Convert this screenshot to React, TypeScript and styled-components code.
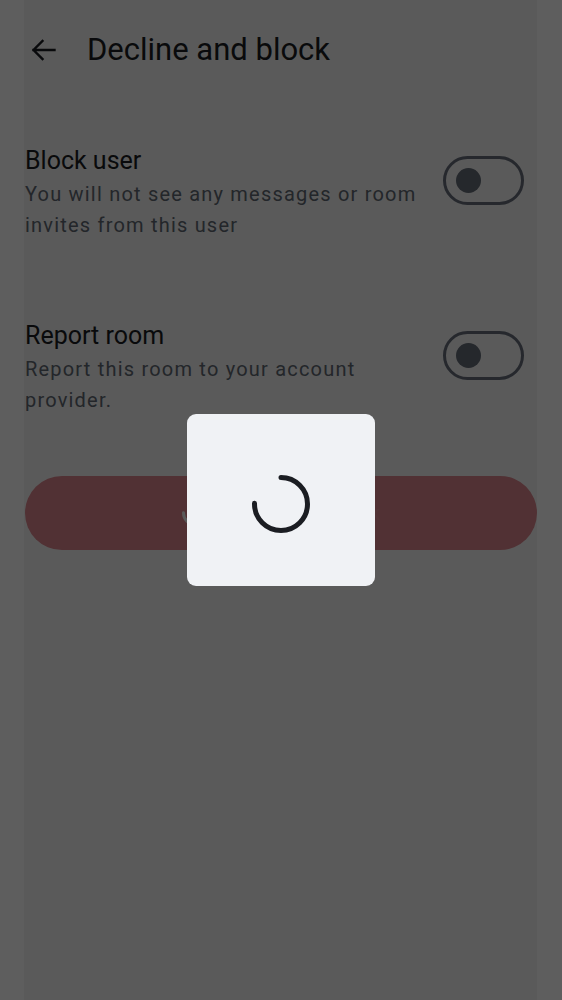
import React from "react";
import styled, { createGlobalStyle } from "styled-components";

const GlobalStyle = createGlobalStyle`
  html, body { margin: 0; padding: 0; background: #ffffff; }
  body { font-family: Roboto, "Noto Sans", sans-serif; -webkit-font-smoothing: antialiased; }
  * { box-sizing: border-box; }
`;

const Page = styled.div`
  position: relative;
  min-height: 1000px;
  background: #ffffff;
  color: #1b1d22;
`;

const TopBar = styled.header`
  height: 100px;
  display: flex;
  align-items: center;
  padding-left: 31px;
  gap: 31px;
`;

const BackButton = styled.button`
  width: 25px;
  height: 24px;
  padding: 0;
  border: 0;
  background: none;
  display: flex;
  align-items: center;
  justify-content: center;
  color: #1b1d22;
`;

const Title = styled.h1`
  margin: 0;
  font-size: 31px;
  font-weight: 400;
  line-height: 36px;
  color: #1b1d22;
`;

const Content = styled.main`
  padding: 46px 25px 0;
  display: flex;
  flex-direction: column;
`;

const SettingsList = styled.div`
  display: flex;
  flex-direction: column;
  gap: 81px;
`;

const SettingRow = styled.div`
  display: flex;
  align-items: flex-start;
  justify-content: space-between;
  gap: 16px;
`;

const SettingText = styled.div`
  flex: 1;
  display: flex;
  flex-direction: column;
  gap: 3px;
`;

const SettingTitle = styled.div`
  font-size: 25px;
  line-height: 30px;
  color: #1b1d22;
`;

const SettingDescription = styled.div`
  font-size: 20px;
  line-height: 30.7px;
  letter-spacing: 1.2px;
  color: #656d77;
`;

const SwitchTrack = styled.div<{ $on?: boolean }>`
  flex: none;
  width: 81px;
  height: 49px;
  margin-top: 10px;
  margin-right: 13px;
  border: 3px solid #6b7380;
  border-radius: 25px;
  display: flex;
  align-items: center;
  justify-content: ${(p) => (p.$on ? "flex-end" : "flex-start")};
  padding: 0 10px;
`;

const SwitchThumb = styled.div`
  width: 25px;
  height: 25px;
  border-radius: 50%;
  background: #69717d;
`;

const DangerButton = styled.button`
  margin-top: 60px;
  height: 74px;
  width: 100%;
  border: 0;
  border-radius: 37px;
  background: #e58b93;
  color: #e8949b;
  font-family: Roboto, "Noto Sans", sans-serif;
  font-size: 20px;
  font-weight: 500;
  display: flex;
  align-items: center;
  justify-content: center;
  gap: 14px;
`;

const Scrim = styled.div`
  position: fixed;
  inset: 0;
  background: linear-gradient(
    to right,
    rgba(0, 0, 0, 0.632) 0,
    rgba(0, 0, 0, 0.632) 24px,
    rgba(0, 0, 0, 0.647) 24px,
    rgba(0, 0, 0, 0.647) 537px,
    rgba(0, 0, 0, 0.632) 537px
  );
  display: flex;
  align-items: center;
  justify-content: center;
`;

const ProgressDialog = styled.div`
  width: 188px;
  height: 172px;
  border-radius: 9px;
  background: #f0f2f5;
  display: flex;
  align-items: center;
  justify-content: center;
  padding-top: 8px;
`;

function Spinner({ size, r, stroke, color }: { size: number; r: number; stroke: number; color: string }) {
  const c = 2 * Math.PI * r;
  const center = size / 2;
  return (
    <svg width={size} height={size} viewBox={`0 0 ${size} ${size}`}>
      <circle
        cx={center}
        cy={center}
        r={r}
        fill="none"
        stroke={color}
        strokeWidth={stroke}
        strokeLinecap="round"
        strokeDasharray={`${c * 0.75} ${c}`}
        transform={`rotate(-90 ${center} ${center})`}
      />
    </svg>
  );
}

function Switch({ on }: { on?: boolean }) {
  return (
    <SwitchTrack $on={on}>
      <SwitchThumb />
    </SwitchTrack>
  );
}

export default function App() {
  return (
    <>
      <GlobalStyle />
      <Page>
        <TopBar>
          <BackButton aria-label="Back">
            <svg width="25" height="22" viewBox="0 0 25 22" fill="none">
              <path
                d="M23.5 11H2.5M11.5 2L2.5 11L11.5 20"
                stroke="currentColor"
                strokeWidth="2.4"
                strokeLinecap="square"
                strokeLinejoin="miter"
              />
            </svg>
          </BackButton>
          <Title>Decline and block</Title>
        </TopBar>
        <Content>
          <SettingsList>
            <SettingRow>
              <SettingText>
                <SettingTitle>Block user</SettingTitle>
                <SettingDescription>
                  You will not see any messages or room invites from this user
                </SettingDescription>
              </SettingText>
              <Switch />
            </SettingRow>
            <SettingRow>
              <SettingText>
                <SettingTitle>Report room</SettingTitle>
                <SettingDescription>Report this room to your account provider.</SettingDescription>
              </SettingText>
              <Switch />
            </SettingRow>
          </SettingsList>
          <DangerButton>
            <Spinner size={26} r={11.5} stroke={3} color="#ffffff" />
            Decline and block
          </DangerButton>
        </Content>
        <Scrim>
          <ProgressDialog role="progressbar">
            <Spinner size={64} r={26.5} stroke={5} color="#1b1d22" />
          </ProgressDialog>
        </Scrim>
      </Page>
    </>
  );
}
